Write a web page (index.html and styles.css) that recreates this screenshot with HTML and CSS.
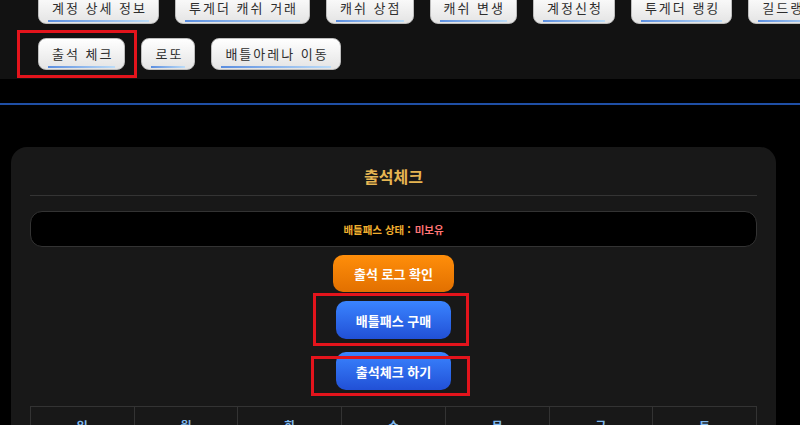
FILE: index.html
```html
<!DOCTYPE html>
<html lang="ko">
<head>
  <meta charset="UTF-8">
  <meta name="viewport" content="width=device-width, initial-scale=1.0">
  <title>출석체크</title>
  <link rel="stylesheet" href="styles.css">
</head>
<body>

<!-- Top menu -->
<div class="top-menu">
  <div class="menu-row">
    <button class="menu-button">계정 상세 정보</button>
    <button class="menu-button">투게더 캐쉬 거래</button>
    <button class="menu-button">캐쉬 상점</button>
    <button class="menu-button">캐쉬 변생</button>
    <button class="menu-button">계정신청</button>
    <button class="menu-button">투게더 랭킹</button>
    <button class="menu-button">길드랭킹</button>
  </div>
  <div class="menu-row">
    <div class="marked">
      <button class="menu-button">출석 체크</button>
      <span class="mark mark-nav"></span>
    </div>
    <button class="menu-button">로또</button>
    <button class="menu-button">배틀아레나 이동</button>
  </div>
</div>
<div class="menu-gap"></div>

<div class="attendance-card">
  <h2 class="card-title">출석체크</h2>
  <div class="pass-status">
    <span class="pass-label">배틀패스 상태 :</span>
    <span class="pass-value">미보유</span>
  </div>

  <div class="action-list">
    <button class="action-button orange">출석 로그 확인</button>
    <div class="marked buy-wrap">
      <button class="action-button blue">배틀패스 구매</button>
      <span class="mark mark-buy"></span>
    </div>
    <div class="marked check-wrap">
      <button class="action-button blue">출석체크 하기</button>
      <span class="mark mark-check"></span>
    </div>
  </div>

  <table class="calendar">
    <tr>
      <th>일</th><th>월</th><th>화</th><th>수</th><th>목</th><th>금</th><th>토</th>
    </tr>
  </table>
</div>

</body>
</html>
```

FILE: styles.css
```css
body {
  margin: 0;
  padding: 0;
  background-color: #000000;
  font-family: "Noto Sans CJK KR", "Noto Sans", sans-serif;
  overflow: hidden;
}

.top-menu {
  background-color: #121212;
  margin-top: -8px;
  padding: 0 0 9px 38px;
}

.menu-row {
  display: flex;
  gap: 16px;
  white-space: nowrap;
  margin-bottom: 14px;
}

.menu-row:last-child {
  margin-bottom: 0;
}

.menu-button {
  position: relative;
  flex: none;
  height: 32px;
  padding: 0 11px 0 13px;
  border: 1px solid #bdbdbd;
  border-radius: 8px;
  background: linear-gradient(#ffffff, #e4e4e4);
  color: #2e2e2e;
  font-family: inherit;
  font-size: 13px;
  letter-spacing: 2px;
  line-height: 30px;
  cursor: pointer;
}

/* blue bar along the bottom of menu buttons */
.menu-button::after {
  content: "";
  position: absolute;
  left: 9px;
  right: 9px;
  bottom: 1px;
  height: 2px;
  background: linear-gradient(to right, #5b8ee0, #bcdcf8);
}

.menu-gap {
  height: 24px;
  border-bottom: 2px solid #1f4fa6;
  margin-bottom: 42px;
}

.marked {
  position: relative;
  display: flex;
}

.mark {
  position: absolute;
  border: 3px solid #e3141c;
  pointer-events: none;
}

.mark-nav {
  top: -8px;
  left: -21px;
  right: -12px;
  bottom: -8px;
}

.mark-buy {
  top: -8px;
  left: -23px;
  right: -18px;
  bottom: -7px;
}

.mark-check {
  top: 4px;
  left: -25px;
  right: -19px;
  bottom: -6px;
}

.attendance-card {
  width: 727px;
  margin-left: 11px;
  padding: 19px 19px 0 19px;
  background-color: #181818;
  border-radius: 16px 16px 0 0;
  height: 300px;
}

.card-title {
  margin: 0;
  padding-bottom: 9px;
  border-bottom: 1px solid #343434;
  text-align: center;
  color: #e6b552;
  font-size: 16px;
  font-weight: 700;
  line-height: 20px;
}

.pass-status {
  margin-top: 15px;
  height: 34px;
  border: 1px solid #333333;
  border-radius: 12px;
  background-color: #000000;
  display: flex;
  justify-content: center;
  align-items: center;
  gap: 4px;
  font-size: 10.5px;
  font-weight: 700;
}

.pass-label {
  color: #f0ae2e;
}

.pass-value {
  color: #ff7474;
}

.action-list {
  display: flex;
  flex-direction: column;
  align-items: center;
  margin-top: 8px;
}

.action-button {
  height: 37px;
  border: none;
  border-radius: 10px;
  color: #ffffff;
  font-family: inherit;
  font-size: 13px;
  font-weight: 700;
  line-height: 37px;
  cursor: pointer;
}

.action-button.orange {
  padding: 0 21px;
  background: linear-gradient(#ff8e0a, #e27000);
}

.action-button.blue {
  height: 38px;
  padding: 0 20px;
  background: linear-gradient(#3a84ff, #2150d6);
}

.buy-wrap {
  margin-top: 9px;
}

.check-wrap {
  margin-top: 13px;
}

.calendar {
  width: 100%;
  margin-top: 16px;
  border-collapse: collapse;
  table-layout: fixed;
}

.calendar th {
  border: 1px solid #333333;
  padding: 10px 0;
  color: #7fb8ee;
  font-size: 12px;
  font-weight: 700;
  text-align: center;
}
```
